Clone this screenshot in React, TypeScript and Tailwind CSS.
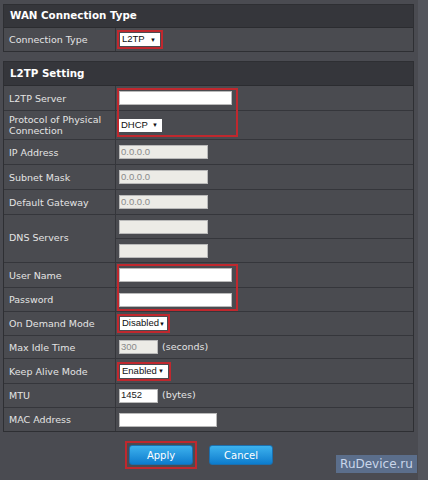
import React from "react";

const LABEL = "font-['DejaVu_Sans',Verdana,sans-serif] text-[9.5px] text-[#e4e4e4]";
const INPUTF = "font-['Liberation_Sans',Arial,sans-serif] text-[9.5px]";

function Row({ h, label, children, last }: { h: number; label: React.ReactNode; children?: React.ReactNode; last?: boolean }) {
  return (
    <div className={`flex ${last ? "" : "border-b border-[#35363b]"}`} style={{ height: h }}>
      <div className={`w-[112px] shrink-0 border-r border-[#35363b] flex items-center pl-[5px] leading-[11px] ${LABEL}`}>{label}</div>
      <div className="flex-1 flex items-center pl-[3px] gap-[4px]">{children}</div>
    </div>
  );
}

function TextBox({ w, value, grey }: { w: number; value?: string; grey?: boolean }) {
  return (
    <div
      className={`h-[14px] border border-[#b9b9b9] flex items-center pl-[1px] ${INPUTF} ${grey ? "bg-[#ecebe6] text-[#8a8a8a]" : "bg-white text-[#222]"}`}
      style={{ width: w }}
    >
      {value}
    </div>
  );
}

function Select({ w, value }: { w: number; value: string }) {
  return (
    <div className={`h-[13px] bg-white flex items-center justify-between pl-[2px] pr-[4px] text-[#111] ${INPUTF}`} style={{ width: w }}>
      <span>{value}</span>
      <span className="text-[6px] leading-none">▼</span>
    </div>
  );
}

function RedSelect({ w, value }: { w: number; value: string }) {
  return (
    <div className="border-[2px] border-[#c0282e] p-[1px] -ml-[2px]">
      <Select w={w} value={value} />
    </div>
  );
}

function Header({ title, h }: { title: string; h: number }) {
  return (
    <div
      className="bg-[#35363b] border-b border-[#2b2c30] flex items-center pl-[6px] font-['DejaVu_Sans',Verdana,sans-serif] font-bold text-[10.3px] text-white"
      style={{ height: h }}
    >
      {title}
    </div>
  );
}

function Btn({ label }: { label: string }) {
  return (
    <div className="w-[64px] h-[20px] rounded-[3px] border border-[#1b6fae] bg-gradient-to-b from-[#3cb2ee] to-[#0b7ccd] flex items-center justify-center font-['DejaVu_Sans',Verdana,sans-serif] text-[10px] text-white">
      {label}
    </div>
  );
}

export default function App() {
  return (
    <div className="relative w-[428px] h-[480px] bg-[#4a4b51] flex overflow-hidden">
      <div className="w-[418px] pt-[4px] pl-[3px] pr-[4px] flex flex-col">
        <div className="border border-[#2e2f33] bg-[#4a4b50]">
          <Header title="WAN Connection Type" h={23} />
          <Row h={23} label="Connection Type" last>
            <RedSelect w={40} value="L2TP" />
          </Row>
        </div>

        <div className="mt-[9px] border border-[#2e2f33] bg-[#4a4b50]">
          <Header title="L2TP Setting" h={24} />
          <div className="relative">
            <Row h={25} label="L2TP Server">
              <TextBox w={113} />
            </Row>
            <Row h={29} label={<span>Protocol of Physical<br />Connection</span>}>
              <Select w={43} value="DHCP" />
            </Row>
            <div className="absolute left-[113px] top-[2px] w-[121px] h-[49px] border-[2px] border-[#c0282e]" />
          </div>
          <Row h={25} label="IP Address">
            <TextBox w={89} value="0.0.0.0" grey />
          </Row>
          <Row h={25} label="Subnet Mask">
            <TextBox w={89} value="0.0.0.0" grey />
          </Row>
          <Row h={25} label="Default Gateway">
            <TextBox w={89} value="0.0.0.0" grey />
          </Row>
          <div className="flex h-[48px] border-b border-[#35363b]">
            <div className={`w-[112px] shrink-0 border-r border-[#35363b] flex items-center pl-[5px] ${LABEL}`}>DNS Servers</div>
            <div className="flex-1 flex flex-col">
              <div className="h-[24px] border-b border-[#35363b] flex items-center pl-[3px]">
                <TextBox w={89} grey />
              </div>
              <div className="flex-1 flex items-center pl-[3px]">
                <TextBox w={89} grey />
              </div>
            </div>
          </div>
          <div className="relative">
            <Row h={25} label="User Name">
              <TextBox w={113} />
            </Row>
            <Row h={24} label="Password">
              <TextBox w={113} />
            </Row>
            <div className="absolute left-[113px] top-[1px] w-[121px] h-[47px] border-[2px] border-[#c0282e]" />
          </div>
          <Row h={24} label="On Demand Mode">
            <RedSelect w={47} value="Disabled" />
          </Row>
          <Row h={23} label="Max Idle Time">
            <TextBox w={39} value="300" grey />
            <span className={LABEL}>(seconds)</span>
          </Row>
          <Row h={25} label="Keep Alive Mode">
            <RedSelect w={48} value="Enabled" />
          </Row>
          <Row h={24} label="MTU">
            <TextBox w={39} value="1452" />
            <span className={LABEL}>(bytes)</span>
          </Row>
          <Row h={23} label="MAC Address" last>
            <TextBox w={98} />
          </Row>
        </div>

        <div className="flex items-center mt-[9px] ml-[122px] gap-[12px]">
          <div className="border-[2px] border-[#c0282e] p-[2px]">
            <Btn label="Apply" />
          </div>
          <Btn label="Cancel" />
        </div>
      </div>
      <div className="flex-1 bg-[#53555c]" />
      <div className="absolute left-[336px] top-[455px] w-[81px] h-[18px] bg-[#5b6e8b] flex items-center justify-center font-['DejaVu_Sans',Verdana,sans-serif] text-[12px] text-[#c9d6ea]">
        RuDevice.ru
      </div>
    </div>
  );
}
